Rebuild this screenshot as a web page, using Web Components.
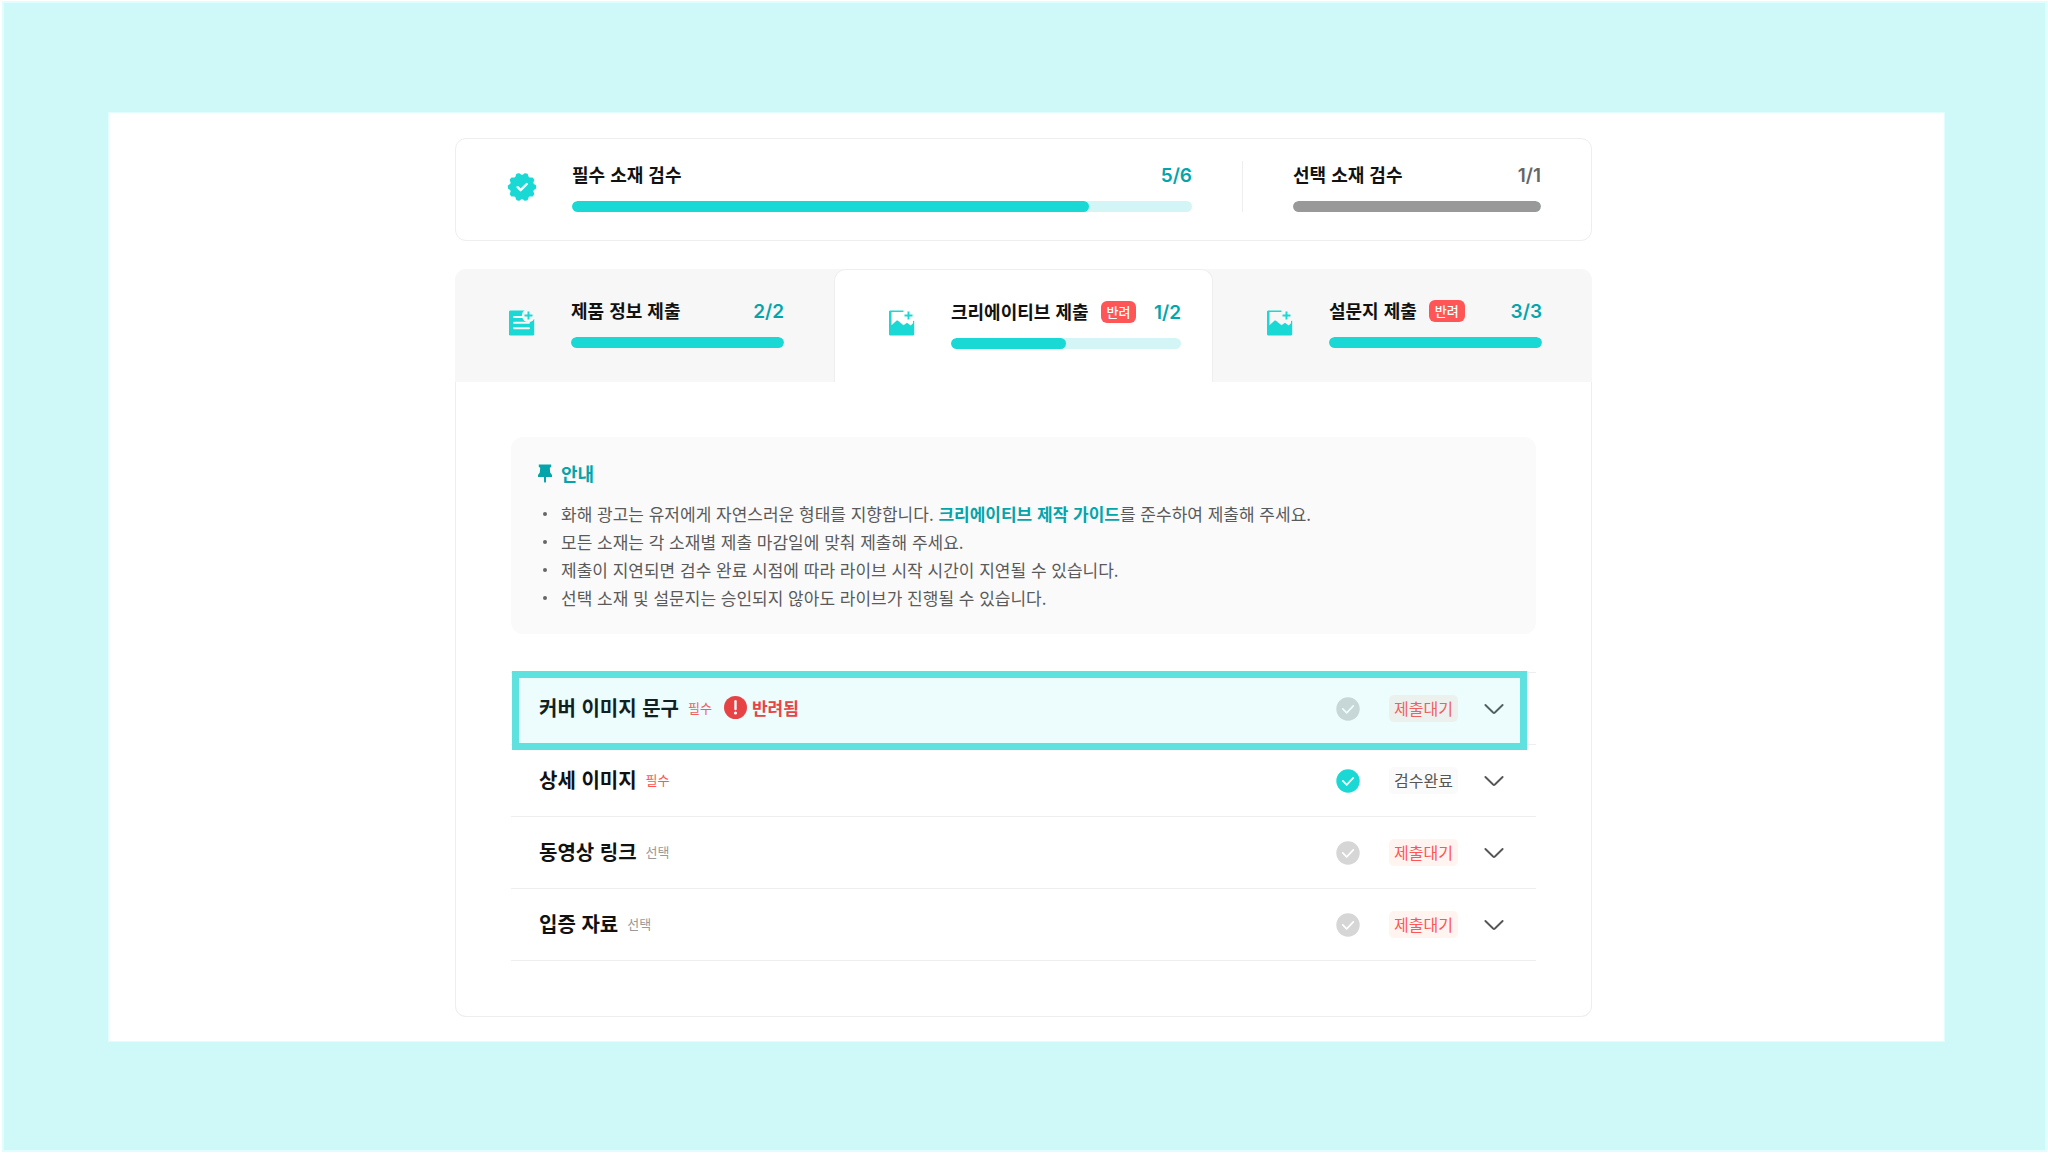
<!DOCTYPE html>
<html lang="ko">
<head>
<meta charset="utf-8">
<title>소재 검수</title>
<style>
html,body{margin:0;min-height:100%}
html{height:100%}
body{height:100%;background:#fff;font-family:Inter,"Noto Sans CJK KR",sans-serif;color:#111;-webkit-font-smoothing:antialiased}
</style>
</head>
<body>
<review-page></review-page>
<script>
const KR = '"Noto Sans CJK KR",sans-serif';

function seal() {
  const pts = [];
  for (let i = 0; i < 20; i++) {
    const r = i % 2 ? 11.4 : 13.4;
    for (const d of [-4.5, 4.5]) {
      const a = (i * 18 + d) * Math.PI / 180;
      pts.push((15 + r * Math.cos(a)).toFixed(2) + ',' + (15 + r * Math.sin(a)).toFixed(2));
    }
  }
  return `<svg width="30" height="30" viewBox="0 0 30 30"><polygon points="${pts.join(' ')}" fill="#1ad9d4" stroke="#1ad9d4" stroke-width="1.6" stroke-linejoin="round"/><path d="M10.6 15.2l3 3 6.2-6.2" fill="none" stroke="#fff" stroke-width="2.4" stroke-linecap="round" stroke-linejoin="round"/></svg>`;
}
const ICONS = {
  seal: seal(),
  doc: `<svg width="26" height="26" viewBox="0 0 26 26"><mask id="m"><rect width="26" height="26" fill="#fff"/><circle cx="19.5" cy="5.5" r="6.6" fill="#000"/><path d="M20 0h6v9h-4z" fill="#000"/><path d="M5 7h9M5 12.7h15M5 18.3h15" stroke="#000" stroke-width="1.9" stroke-linecap="round"/></mask><rect x="0" y="0.4" width="25.2" height="25.2" rx="1.4" fill="#1ad9d4" mask="url(#m)"/><path d="M19.5 1.5v8M15.5 5.5h8" stroke="#1ad9d4" stroke-width="2"/></svg>`,
  image: `<svg width="26" height="26" viewBox="0 0 26 26"><path d="M14.5 .4H1.4Q0 .4 0 1.8V24.2q0 1.4 1.4 1.4H23.8q1.4 0 1.4-1.4V10.8l-1.2.2v2.2l-2.3 2.4-3.7-2.8-3.5 2.4-5.8-4.8-1 .2-5.2 4.6V2H14.5z" fill="#1ad9d4"/><path d="M19.5 1.5v8M15.5 5.5h8" stroke="#1ad9d4" stroke-width="2"/></svg>`,
  pin: `<svg width="14" height="19" viewBox="0 0 14 19"><path d="M.8.5h12.4v2.6l-1.4.6.4 4.9 1.8 2.4v2H8v4.8L7 19l-1-1.200V13H0v-2l1.800-2.400.4-4.900L.8 3.100z" fill="#03a5ab"/></svg>`,
  alert: `<svg width="23" height="23" viewBox="0 0 23 23"><circle cx="11.500" cy="11.500" r="11.500" fill="#f93739"/><path d="M11.500 5.200v7.800" stroke="#fff" stroke-width="2.400" stroke-linecap="round"/><circle cx="11.500" cy="17" r="1.600" fill="#fff"/></svg>`,
  check: `<svg width="24" height="24" viewBox="0 0 24 24"><circle cx="12" cy="12" r="11.700" fill="currentColor"/><path d="M6.800 11.800l3.900 4 6.600-7" fill="none" stroke="#fff" stroke-width="1.700" stroke-linecap="round" stroke-linejoin="round"/></svg>`,
  chevron: `<svg width="24" height="24" viewBox="0 0 24 24"><path d="M3.400 8l7.700 7.500q.9.800 1.800 0L20.600 8" fill="none" stroke="#555" stroke-width="1.900" stroke-linecap="round"/></svg>`
};

class UiIcon extends HTMLElement {
  connectedCallback() {
    this.attachShadow({mode: 'open'}).innerHTML =
      `<style>:host{display:block;flex:none}svg{display:block}</style>` + ICONS[this.getAttribute('name')];
  }
}
customElements.define('ui-icon', UiIcon);

class RejectBadge extends HTMLElement {
  connectedCallback() {
    this.attachShadow({mode: 'open'}).innerHTML = `<style>
      :host{display:block;flex:none;align-self:center;box-sizing:border-box;padding:0 6px;border-radius:6px;background:#ff5557;color:#fff;font:500 13px/22px ${KR}}
    </style><slot></slot>`;
  }
}
customElements.define('reject-badge', RejectBadge);

class ProgressMeter extends HTMLElement {
  connectedCallback() {
    const [done, all] = this.getAttribute('count').split('/').map(Number);
    this.attachShadow({mode: 'open'}).innerHTML = `<style>
      :host{display:block;min-width:0}
      .top{display:flex;align-items:baseline;gap:12px;height:28px;margin-bottom:12px;white-space:nowrap}
      .name{font:700 18px/26px ${KR};color:#111}
      .count{margin-left:auto;font:600 19px/26px Inter,sans-serif;color:#03a5ab}
      .track{height:11px;border-radius:6px;background:#d3f5f5;overflow:hidden}
      .fill{height:100%;width:${done / all * 100}%;border-radius:6px;background:#1ad9d4}
      :host([tone=gray]) .count{color:#666}
      :host([tone=gray]) .fill{background:#999}
    </style>
    <div class="top"><span class="name" id="n">${this.getAttribute('label')}</span><slot></slot><span class="count">${done}/${all}</span></div>
    <div class="track" role="progressbar" aria-labelledby="n" aria-valuenow="${done}" aria-valuemin="0" aria-valuemax="${all}"><div class="fill"></div></div>`;
  }
}
customElements.define('progress-meter', ProgressMeter);

class ReviewSummary extends HTMLElement {
  connectedCallback() {
    this.attachShadow({mode: 'open'}).innerHTML = `<style>
      :host{display:flex;box-sizing:border-box;padding:22px 50px 28px 51px;border:1px solid #eee;border-radius:11px}
      ui-icon{align-self:center;margin:0 35px 0 0}
      .main{flex:5}
      .side{flex:2}
      .rule{width:1px;background:#eee;margin:0 50px}
    </style>
    <ui-icon name="seal"></ui-icon>
    <progress-meter class="main" label="필수 소재 검수" count="5/6"></progress-meter>
    <div class="rule"></div>
    <progress-meter class="side" tone="gray" label="선택 소재 검수" count="1/1"></progress-meter>`;
  }
}
customElements.define('review-summary', ReviewSummary);

class SubmitTab extends HTMLElement {
  connectedCallback() {
    const on = this.hasAttribute('selected');
    this.attachShadow({mode: 'open'}).innerHTML = `<style>
      :host{display:block;flex:1 1 0;min-width:0}
      button{display:flex;width:100%;height:113px;box-sizing:border-box;align-items:flex-start;padding:27px 49px 0 53px;border:1px solid transparent;border-bottom:0;background:none;text-align:left;cursor:pointer}
      :host([selected]) button{background:#fff;border-color:#eee;border-radius:12px 12px 0 0;padding:28px 31px 0 54px}
      ui-icon{margin:13px 36px 0 0}
      :host([selected]) ui-icon{margin-top:12px}
      progress-meter{flex:1}
    </style>
    <button type="button" role="tab" aria-selected="${on}"><ui-icon name="${this.getAttribute('icon')}"></ui-icon>
    <progress-meter label="${this.getAttribute('label')}" count="${this.getAttribute('count')}"><slot></slot></progress-meter></button>`;
  }
}
customElements.define('submit-tab', SubmitTab);

class SubmitTabs extends HTMLElement {
  connectedCallback() {
    this.attachShadow({mode: 'open'}).innerHTML = `<style>
      :host{display:block}
      div{display:flex;background:#f7f7f7;border-radius:11px 11px 0 0}
    </style><div role="tablist"><slot></slot></div>`;
  }
}
customElements.define('submit-tabs', SubmitTabs);

class GuideNotice extends HTMLElement {
  connectedCallback() {
    this.attachShadow({mode: 'open'}).innerHTML = `<style>
      :host{display:block;box-sizing:border-box;padding:23px 27px 22px;border-radius:12px;background:#fafafa}
      h2{display:flex;align-items:center;gap:9px;margin:0 0 14px;font:700 18px/26px ${KR};color:#03a5ab}
      ul{margin:0;padding:0;list-style:none;font:400 17px/28px ${KR};color:#5a5a5a}
      li{display:flex;align-items:center}
      li::before{content:"";flex:none;width:4px;height:4px;margin:0 14px 0 5px;border-radius:50%;background:#666}
      a{color:#03a5ab;font-weight:700;text-decoration:none}
    </style>
    <h2><ui-icon name="pin"></ui-icon>안내</h2>
    <ul>
      <li><span>화해 광고는 유저에게 자연스러운 형태를 지향합니다. <a href="#guide">크리에이티브 제작 가이드</a>를 준수하여 제출해 주세요.</span></li>
      <li><span>모든 소재는 각 소재별 제출 마감일에 맞춰 제출해 주세요.</span></li>
      <li><span>제출이 지연되면 검수 완료 시점에 따라 라이브 시작 시간이 지연될 수 있습니다.</span></li>
      <li><span>선택 소재 및 설문지는 승인되지 않아도 라이브가 진행될 수 있습니다.</span></li>
    </ul>`;
  }
}
customElements.define('guide-notice', GuideNotice);

class MaterialRow extends HTMLElement {
  connectedCallback() {
    const need = this.getAttribute('need'), done = this.hasAttribute('done'), hot = this.hasAttribute('highlight');
    this.attachShadow({mode: 'open'}).innerHTML = `<style>
      :host{display:block;position:relative;border-bottom:1px solid #eee}
      button{display:flex;width:100%;height:71px;box-sizing:border-box;align-items:center;padding:0 30px 0 28px;border:0;background:none;text-align:left;cursor:pointer;white-space:nowrap;font-family:${KR}}
      .title{display:flex;align-items:center;padding-bottom:2px}
      .name{font-size:20px;line-height:28px;font-weight:700;color:#111}
      .need{margin-left:9px;font-size:13px;line-height:20px;color:${need === '필수' ? '#ff5557' : '#999'}}
      .rejected{display:flex;align-items:center;gap:5px;margin-left:12px;font-size:17px;line-height:28px;font-weight:700;color:#f93739}
      .check{margin-left:auto;color:${done ? '#1ad9d4' : '#d6d6d6'}}
      .state{margin:0 24px 0 29px;padding:0 5px;border-radius:5px;font-size:16px;line-height:27px;background:${done ? '#fafafa' : '#fff4f0'};color:${done ? '#555' : '#ff5557'}}
      .mark{position:absolute;inset:-2px 9px -6px 1px;border:7px solid #5fe1df;background:rgba(26,217,212,.08);pointer-events:none}
    </style>
    <button type="button" aria-expanded="false">
      <span class="title"><span class="name">${this.getAttribute('name')}</span><span class="need">${need}</span>
      ${hot ? '<span class="rejected"><ui-icon name="alert"></ui-icon><slot></slot></span>' : ''}</span>
      <ui-icon class="check" name="check"></ui-icon>
      <span class="state">${done ? '검수완료' : '제출대기'}</span>
      <ui-icon name="chevron"></ui-icon>
    </button>${hot ? '<div class="mark"></div>' : ''}`;
  }
}
customElements.define('material-row', MaterialRow);

class ReviewPage extends HTMLElement {
  connectedCallback() {
    this.attachShadow({mode: 'open'}).innerHTML = `<style>
      :host{display:flex;box-sizing:border-box;min-height:100%;padding:111px 102px 110px 106px;border:solid #fff;border-width:1px 1px 1px 2px;background:#cef9f8;box-shadow:inset 0 0 0 2px #e0fefd}
      main{flex:1;box-sizing:border-box;padding:25px 6px 3px 0;border:1px solid #e0fefd;background:#fff;background-clip:padding-box}
      .content{max-width:1137px;margin:0 auto}
      submit-tabs{margin-top:28px}
      .body{box-sizing:border-box;padding:55px 55px 55px;border:1px solid #eee;border-top:0;border-radius:0 0 11px 11px}
      .list{margin-top:38px;border-top:1px solid #eee}
    </style>
    <main><div class="content">
      <review-summary></review-summary>
      <submit-tabs>
        <submit-tab icon="doc" label="제품 정보 제출" count="2/2"></submit-tab>
        <submit-tab selected icon="image" label="크리에이티브 제출" count="1/2"><reject-badge>반려</reject-badge></submit-tab>
        <submit-tab icon="image" label="설문지 제출" count="3/3"><reject-badge>반려</reject-badge></submit-tab>
      </submit-tabs>
      <section class="body">
        <guide-notice></guide-notice>
        <div class="list">
          <material-row highlight name="커버 이미지 문구" need="필수">반려됨</material-row>
          <material-row done name="상세 이미지" need="필수"></material-row>
          <material-row name="동영상 링크" need="선택"></material-row>
          <material-row name="입증 자료" need="선택"></material-row>
        </div>
      </section>
    </div></main>`;
  }
}
customElements.define('review-page', ReviewPage);
</script>
</body>
</html>
